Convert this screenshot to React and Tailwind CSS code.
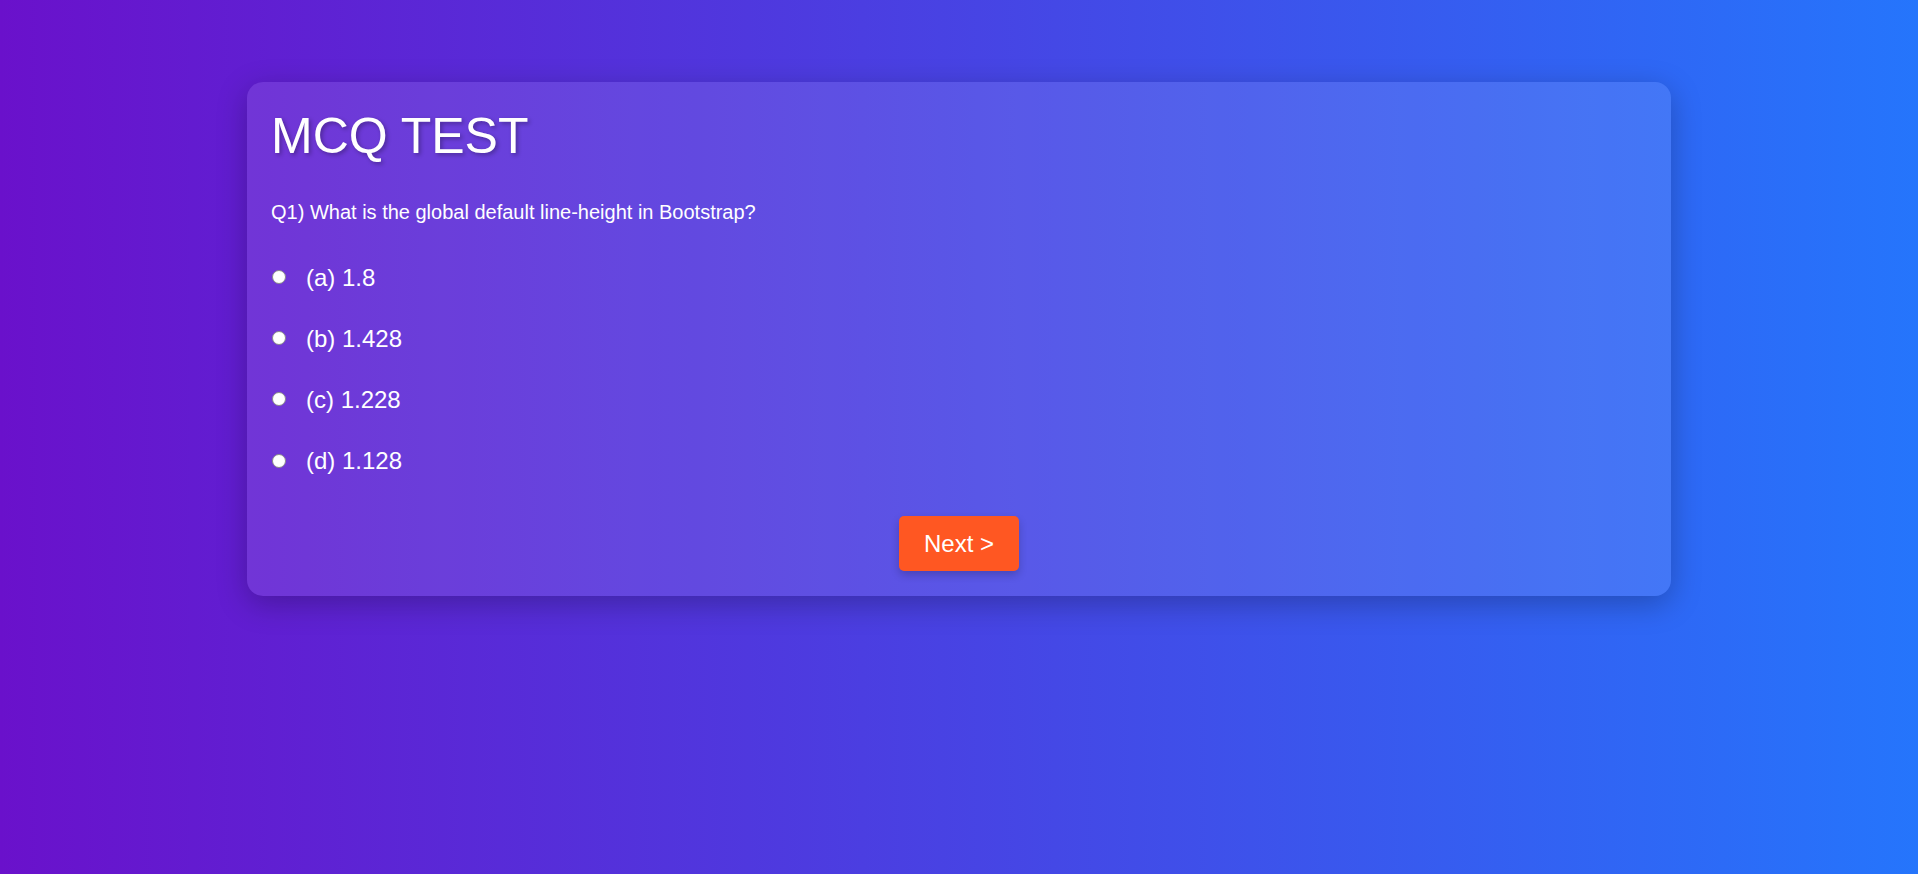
import React from "react";

const options = ["(a) 1.8", "(b) 1.428", "(c) 1.228", "(d) 1.128"];

export default function App() {
  return (
    <div
      className="h-[874px] w-full bg-[linear-gradient(to_right,#6a11cb,#2575fc)] pt-[82px] text-white"
      style={{ fontFamily: '"Liberation Sans", Arial, sans-serif' }}
    >
      <div className="mx-[247px] rounded-[16px] bg-white/10 px-[24px] pt-[26px] pb-[25px] shadow-[0_8px_30px_rgba(0,0,0,0.25)]">
        <h1 className="text-[50px] leading-[1.15] font-normal [text-shadow:2px_2px_4px_rgba(0,0,0,0.3)]">
          MCQ TEST
        </h1>
        <p className="mt-[35px] text-[20px] leading-[1.15]">
          Q1) What is the global default line-height in Bootstrap?
        </p>
        <div className="mt-[40px] flex flex-col gap-[33.5px]">
          {options.map((o) => (
            <label key={o} className="flex items-center gap-[20px]">
              <span className="ml-[1px] inline-block h-[14px] w-[14px] rounded-full border border-[#8a8a8a] bg-white" />
              <span className="text-[24px] leading-[1.15]">{o}</span>
            </label>
          ))}
        </div>
        <div className="mt-[42px] flex justify-center">
          <button className="h-[55px] w-[120px] rounded-[5px] bg-[#ff5722] text-[24px] text-white shadow-[0_4px_8px_rgba(0,0,0,0.2)]">
            Next &gt;
          </button>
        </div>
      </div>
    </div>
  );
}
